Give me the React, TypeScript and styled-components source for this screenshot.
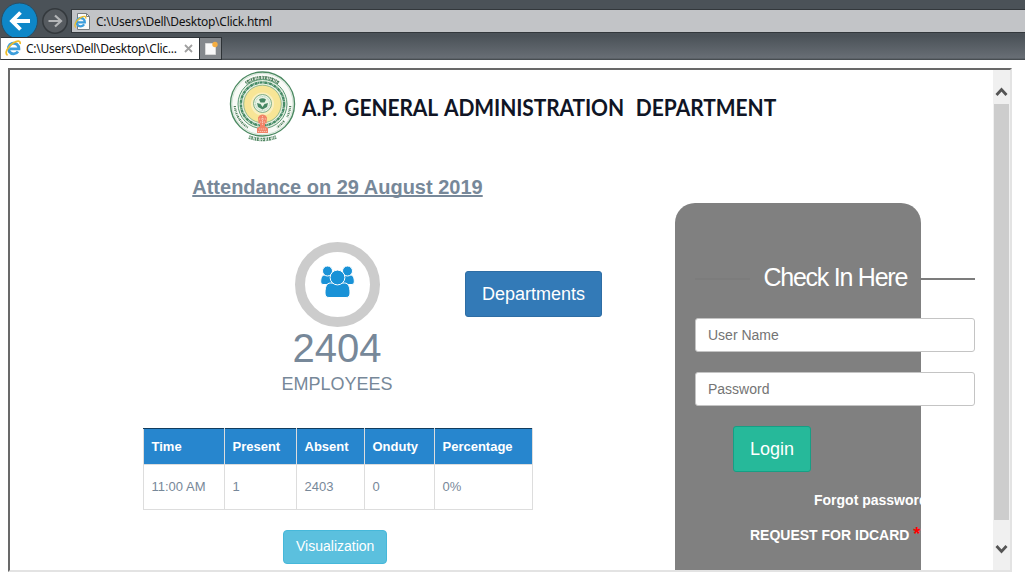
import React from "react";
import styled, { createGlobalStyle } from "styled-components";

const GlobalStyle = createGlobalStyle`
  * { box-sizing: border-box; }
  body {
    margin: 0;
    background: #fff;
    font-family: "Liberation Sans", Arial, sans-serif;
    overflow: hidden;
  }
`;

const Browser = styled.div`
  width: 1025px;
  height: 583px;
  display: flex;
  flex-direction: column;
  overflow: hidden;
`;

const Chrome = styled.header`
  height: 60px;
  flex: none;
  display: flex;
  flex-direction: column;
  background: linear-gradient(#4b5258 0, #4b5258 36px, #686e75 58px, #50565b 59px, #3f4448 60px);
  font-family: "Noto Sans", "Open Sans", sans-serif;
  color: #111;
`;

const NavRow = styled.div`
  height: 37px;
  display: flex;
  align-items: flex-start;
`;

const NavIcons = styled.svg`
  width: 71px;
  height: 37px;
  flex: none;
`;

const AddressBar = styled.div`
  flex: 1;
  height: 24px;
  margin-top: 9px;
  padding-left: 2px;
  display: flex;
  align-items: center;
  gap: 5px;
  background: #c2c4c7;
  border: 1px solid #33383c;
  border-right: 0;
  font-size: 12px;
  letter-spacing: -0.26px;
`;

const TabRow = styled.div`
  height: 23px;
  display: flex;
`;

const Tab = styled.div`
  width: 200px;
  height: 23px;
  padding: 0 6px 0 4px;
  display: flex;
  align-items: center;
  background: #fff;
  border: 1px solid #2e3337;
  border-left-color: #70757a;
  font-size: 12px;
  white-space: nowrap;
`;

const TabTitle = styled.span`
  flex: 1;
  margin-left: 4px;
  letter-spacing: -0.26px;
`;

const NewTab = styled.div`
  width: 22px;
  height: 23px;
  display: flex;
  align-items: center;
  justify-content: center;
  background: #85898d;
  border: 1px solid #2e3337;
  border-left: 0;
`;

const Frame = styled.main`
  width: 1004px;
  height: 504px;
  margin: 8px 0 0 8px;
  display: flex;
  border: 2px solid;
  border-color: #696969 #e3e3e3 #e3e3e3 #696969;
  overflow: hidden;
`;

const Page = styled.div`
  width: 983px;
  height: 500px;
  overflow: hidden;
`;

const Banner = styled.div`
  height: 74px;
  padding-left: 217px;
  display: flex;
  align-items: center;
`;

const BannerText = styled.div`
  display: flex;
  gap: 13px;
  padding-bottom: 1px;
  color: #101525;
  font-family: Lato, "Open Sans", sans-serif;
  font-size: 23px;
  font-weight: 700;
  line-height: 30px;
  white-space: nowrap;
  transform: scaleX(0.912);
  transform-origin: left center;
`;

const Words = styled.span<{ $tracking: number }>`
  letter-spacing: ${(p) => p.$tracking}px;
  word-spacing: 2.5px;
`;

const Columns = styled.div`
  display: flex;
  align-items: flex-start;
  color: #778899;
`;

const Summary = styled.section`
  width: 665px;
  display: flex;
  flex-direction: column;
  align-items: flex-start;
`;

const Heading = styled.h1`
  width: 655px;
  margin: 31px 0 43px;
  text-align: center;
  font-size: 20px;
  line-height: 24px;
  text-decoration: underline;
  text-decoration-skip-ink: none;
`;

const CountRow = styled.div`
  display: flex;
  align-items: flex-start;
`;

const Count = styled.div`
  width: 130px;
  margin-left: 262px;
  display: flex;
  flex-direction: column;
  align-items: center;
`;

const Ring = styled.div`
  width: 85px;
  height: 85px;
  border: 10px solid #ccc;
  border-radius: 50%;
  display: flex;
  justify-content: center;
  padding-top: 14px;
`;

const CountValue = styled.div`
  font-size: 40px;
  line-height: 42px;
`;

const CountLabel = styled.div`
  padding-top: 2px;
  font-size: 18px;
  line-height: 26px;
`;

const Button = styled.button<{ $fill: string; $edge: string; $large?: boolean }>`
  height: ${(p) => (p.$large ? 46 : 34)}px;
  padding: 0 ${(p) => (p.$large ? 16 : 12)}px;
  font: ${(p) => (p.$large ? 18 : 14)}px "Liberation Sans", Arial, sans-serif;
  color: #fff;
  background: ${(p) => p.$fill};
  border: 1px solid ${(p) => p.$edge};
  border-radius: ${(p) => (p.$large ? 3 : 4)}px;
`;

const DepartmentsButton = styled(Button)`
  width: 137px;
  margin: 29px 0 0 63px;
`;

const Table = styled.table`
  width: 390px;
  margin: 31px 0 0 133px;
  table-layout: fixed;
  border-collapse: collapse;
  font-size: 13px;
  line-height: 18px;
  text-align: left;
`;

const HeadCell = styled.th`
  height: 36px;
  padding: 0 8px 0 7.5px;
  color: #fff;
  background: #2786ce;
  border: 1px solid #ddd;
  border-top-color: #123c5e;
`;

const Cell = styled.td`
  height: 45px;
  padding: 0 8px 1px 7.5px;
  border: 1px solid #ddd;
`;

const VisualizationButton = styled(Button)`
  width: 104px;
  margin: 20px 0 0 273px;
  padding-bottom: 2px;
`;

const CheckIn = styled.aside`
  width: 246px;
  height: 420px;
  margin-top: 59px;
  padding: 58px 20px 0;
  background: #808080;
  border-radius: 20px 20px 0 0;
`;

const Form = styled.form`
  width: 280px;
  display: flex;
  flex-direction: column;
  align-items: flex-start;
  color: #fff;
`;

const Title = styled.h2`
  width: 280px;
  height: 34px;
  margin: 0 0 23px;
  display: flex;
  align-items: center;
  font-size: 25px;
  font-weight: 400;
  letter-spacing: -1.25px;
  line-height: 32px;
  white-space: nowrap;
`;

const Rule = styled.span<{ $width: number }>`
  width: ${(p) => p.$width}px;
  height: 2px;
  margin-top: 2px;
  background: #7c7c7c;
`;

const TitleText = styled.span`
  flex: 1;
  padding: 0 0 2px 13.5px;
`;

const Input = styled.input`
  width: 280px;
  height: 34px;
  margin: 0 0 20px;
  padding: 0 12px;
  font: 14px "Liberation Sans", Arial, sans-serif;
  background: #fff;
  border: 1px solid #c4c4c4;
  border-radius: 3px;
  &::placeholder { color: #747474; opacity: 1; }
`;

const LoginButton = styled(Button)`
  width: 78px;
  margin-left: 38px;
`;

const FormLink = styled.a<{ $indent: number; $gap: number }>`
  margin: ${(p) => p.$gap}px 0 0 ${(p) => p.$indent}px;
  font-size: 14px;
  font-weight: 700;
  line-height: 20px;
  white-space: nowrap;
`;

const Required = styled.span`
  color: #f00;
  font-size: 18px;
  line-height: 1px;
`;

const Scrollbar = styled.div`
  width: 17px;
  height: 500px;
  display: flex;
  flex-direction: column;
  background: #f0f0f0;
`;

const ScrollArrow = styled.svg`
  width: 17px;
  height: 34px;
`;

const Thumb = styled.div`
  width: 15px;
  height: 416px;
  margin-left: 1px;
  background: #cdcdcd;
`;

function ExplorerMark({ page = false }: { page?: boolean }) {
  return (
    <svg width="17" height="17" viewBox="0 0 17 17" fill="none">
      {page && <path d="M3.500 .5h9l3 3v13h-12z" fill="#fbfbf8" stroke="#777d80" />}
      {page && <path d="M12.500 .5v3h3" stroke="#777d80" />}
      <g transform={page ? "translate(0 2.500) scale(.78)" : undefined}>
        <path d="M13 11.500A5.300 5.300 0 1 1 13.900 8.900H5" stroke="#3c9edb" strokeWidth="2.900" />
        <path d="M2.600 15.200C-1 13.800 2.500 6.500 8.500 2.800c3.900-2.400 7.300-2.300 6.600 1.200" stroke="#edbd2b" strokeWidth="1.700" />
      </g>
    </svg>
  );
}

function Emblem() {
  return (
    <svg width="75" height="74" viewBox="0 0 75 74" fill="none">
      <circle cx="35.500" cy="34" r="32" fill="#f8faf6" stroke="#4c8a62" strokeWidth="1.400" />
      <circle cx="35.500" cy="34" r="30.600" stroke="#a9c9b2" strokeWidth=".5" />
      <path d="M19 13.500a27 27 0 0 1 33 0" stroke="#4b7c59" strokeWidth="4" strokeDasharray="1.300 .6 2.200 .7 .8 .5" />
      <path d="M19 13.500a27 27 0 0 1 33 0" stroke="#f8faf6" strokeWidth="1" strokeDasharray="1 1.400" />
      <path d="M7.800 36a28 28 0 0 0 13 21.500" stroke="#4b7c59" strokeWidth="2.200" strokeDasharray="1.200 .9 .7 .8" />
      <path d="M63.200 36a28 28 0 0 1-3 11" stroke="#4b7c59" strokeWidth="2.200" strokeDasharray="1.200 .9 .7 .8" />
      <path d="M57 51a28 28 0 0 1-7 6.500" stroke="#4b7c59" strokeWidth="2.200" strokeDasharray="1.200 .9 .7 .8" />
      <circle cx="35.500" cy="34" r="24.500" fill="#e8f1e4" stroke="#5c9a75" />
      <circle cx="35.500" cy="34" r="21.600" stroke="#458a66" strokeWidth="2.400" strokeDasharray="3 .4 1 .5" />
      <circle cx="35.500" cy="34" r="18.800" fill="#f8e596" stroke="#7eaf7d" strokeWidth=".8" />
      <circle cx="35.500" cy="34" r="11.500" fill="#f9efbf" />
      <circle cx="35.500" cy="33.500" r="9" fill="#e9f3e6" stroke="#6fa581" strokeWidth=".9" />
      <circle cx="35.500" cy="33.500" r="7" stroke="#8ab89b" strokeWidth=".6" strokeDasharray="1 .7" />
      <path
        d="M32 29.500q3.500-2.500 7 0l-1.500 3h-4zM30 33l3.500 1 2 3 2-3 3.500-1-1 4-4.500 2.500L31 37z"
        fill="#478764"
      />
      <path d="M32.500 45.500q3-2 6 0l1.500 2-.5 6h-1.500v3l3 1.500V63H30v-5l3-1.500v-3h-1.500l-.5-6z" fill="#f18468" />
      <path d="M32 49h7M33 52h5M32 59h7M31 61.500h9M35.500 46v9" stroke="#fbd3c3" strokeWidth=".8" strokeDasharray="1.300 .7" />
      <path d="M22 67q13.500 5 27 0" stroke="#548965" strokeWidth="3.600" strokeDasharray="1.300 .6 2.200 .7 .8 .5" />
      <path d="M22 67q13.500 5 27 0" stroke="#fff" strokeWidth=".9" strokeDasharray="1 1.400" />
    </svg>
  );
}

function People() {
  return (
    <svg width="34" height="32" viewBox="0 0 34 32" fill="#1992d7" stroke="#fff" overflow="visible">
      <g transform="translate(.5 0)">
        <path d="M4 9C1 9 .2 13 .2 16q0 2.500 2.300 2.500H12V9zM30 9c3 0 3.800 4 3.800 7q0 2.500-2.300 2.500H22V9z" />
        <circle cx="7" cy="5" r="5" />
        <circle cx="27" cy="5" r="5" />
        <path d="M10 17C6 17 4.500 21 4.500 27q0 4.500 4 4.500h17q4 0 4-4.500c0-6-1.500-10-5.500-10z" />
        <circle cx="17" cy="11.500" r="7.400" />
      </g>
    </svg>
  );
}

const columns = [
  { name: "Time", value: "11:00 AM", width: 81 },
  { name: "Present", value: "1", width: 72 },
  { name: "Absent", value: "2403", width: 68 },
  { name: "Onduty", value: "0", width: 70 },
  { name: "Percentage", value: "0%", width: 98 },
];

export default function App() {
  return (
    <Browser>
      <GlobalStyle />
      <Chrome>
        <NavRow>
          <NavIcons viewBox="0 0 71 37" fill="none">
            <circle cx="19.500" cy="21" r="18" fill="#0e87c8" stroke="#2a4d62" />
            <path d="M30 21H12m8.500-8.500L12 21l8.500 8.500" stroke="#fff" strokeWidth="3.800" />
            <circle cx="55" cy="21" r="12.200" fill="#565b60" stroke="#34393d" strokeWidth="1.500" />
            <path d="M48.500 21h12m-5.500-5.500 6 5.500-6 5.500" stroke="#b4b6b8" strokeWidth="2.200" />
          </NavIcons>
          <AddressBar>
            <ExplorerMark page />
            <span>C:\Users\Dell\Desktop\Click.html</span>
          </AddressBar>
        </NavRow>
        <TabRow>
          <Tab>
            <ExplorerMark />
            <TabTitle>C:\Users\Dell\Desktop\Clic...</TabTitle>
            <svg width="9" height="9" viewBox="0 0 9 9">
              <path d="m1 1 7 7m0-7-7 7" stroke="#a0a0a0" strokeWidth="1.800" />
            </svg>
          </Tab>
          <NewTab>
            <svg width="14" height="15" viewBox="0 0 14 15">
              <path d="M1.500 2.500h10v11h-10z" fill="#fafafa" stroke="#d9d9d9" />
              <circle cx="11" cy="3.500" r="2.700" fill="#f5ae42" />
            </svg>
          </NewTab>
        </TabRow>
      </Chrome>
      <Frame>
        <Page>
          <Banner>
            <Emblem />
            <BannerText>
              <Words $tracking={-0.12}>A.P. GENERAL ADMINISTRATION</Words>
              <Words $tracking={-0.05}>DEPARTMENT</Words>
            </BannerText>
          </Banner>
          <Columns>
            <Summary>
              <Heading>Attendance on 29 August 2019</Heading>
              <CountRow>
                <Count>
                  <Ring><People /></Ring>
                  <CountValue>2404</CountValue>
                  <CountLabel>EMPLOYEES</CountLabel>
                </Count>
                <DepartmentsButton $large $fill="#337ab7" $edge="#2e6da4">Departments</DepartmentsButton>
              </CountRow>
              <Table>
                <colgroup>
                  {columns.map((c) => <col key={c.name} width={c.width} />)}
                </colgroup>
                <thead>
                  <tr>{columns.map((c) => <HeadCell key={c.name}>{c.name}</HeadCell>)}</tr>
                </thead>
                <tbody>
                  <tr>{columns.map((c) => <Cell key={c.name}>{c.value}</Cell>)}</tr>
                </tbody>
              </Table>
              <VisualizationButton $fill="#5bc0de" $edge="#46b8da">Visualization</VisualizationButton>
            </Summary>
            <CheckIn>
              <Form>
                <Title>
                  <Rule $width={55} />
                  <TitleText>Check In Here</TitleText>
                  <Rule $width={55} />
                </Title>
                <Input placeholder="User Name" />
                <Input type="password" placeholder="Password" />
                <LoginButton type="button" $large $fill="#26b99a" $edge="#169f85">Login</LoginButton>
                <FormLink $indent={119} $gap={18}>Forgot password?</FormLink>
                <FormLink $indent={55} $gap={15}>
                  REQUEST FOR IDCARD <Required>*</Required>
                </FormLink>
              </Form>
            </CheckIn>
          </Columns>
        </Page>
        <Scrollbar>
          <ScrollArrow viewBox="0 0 17 34" fill="none">
            <path d="m3.500 25 5-5.500 5 5.500" stroke="#555" strokeWidth="2.800" />
          </ScrollArrow>
          <Thumb />
          <ScrollArrow viewBox="0 0 17 34" fill="none">
            <path d="m3.500 26 5 5.500 5-5.500" stroke="#555" strokeWidth="2.800" />
          </ScrollArrow>
        </Scrollbar>
      </Frame>
    </Browser>
  );
}
